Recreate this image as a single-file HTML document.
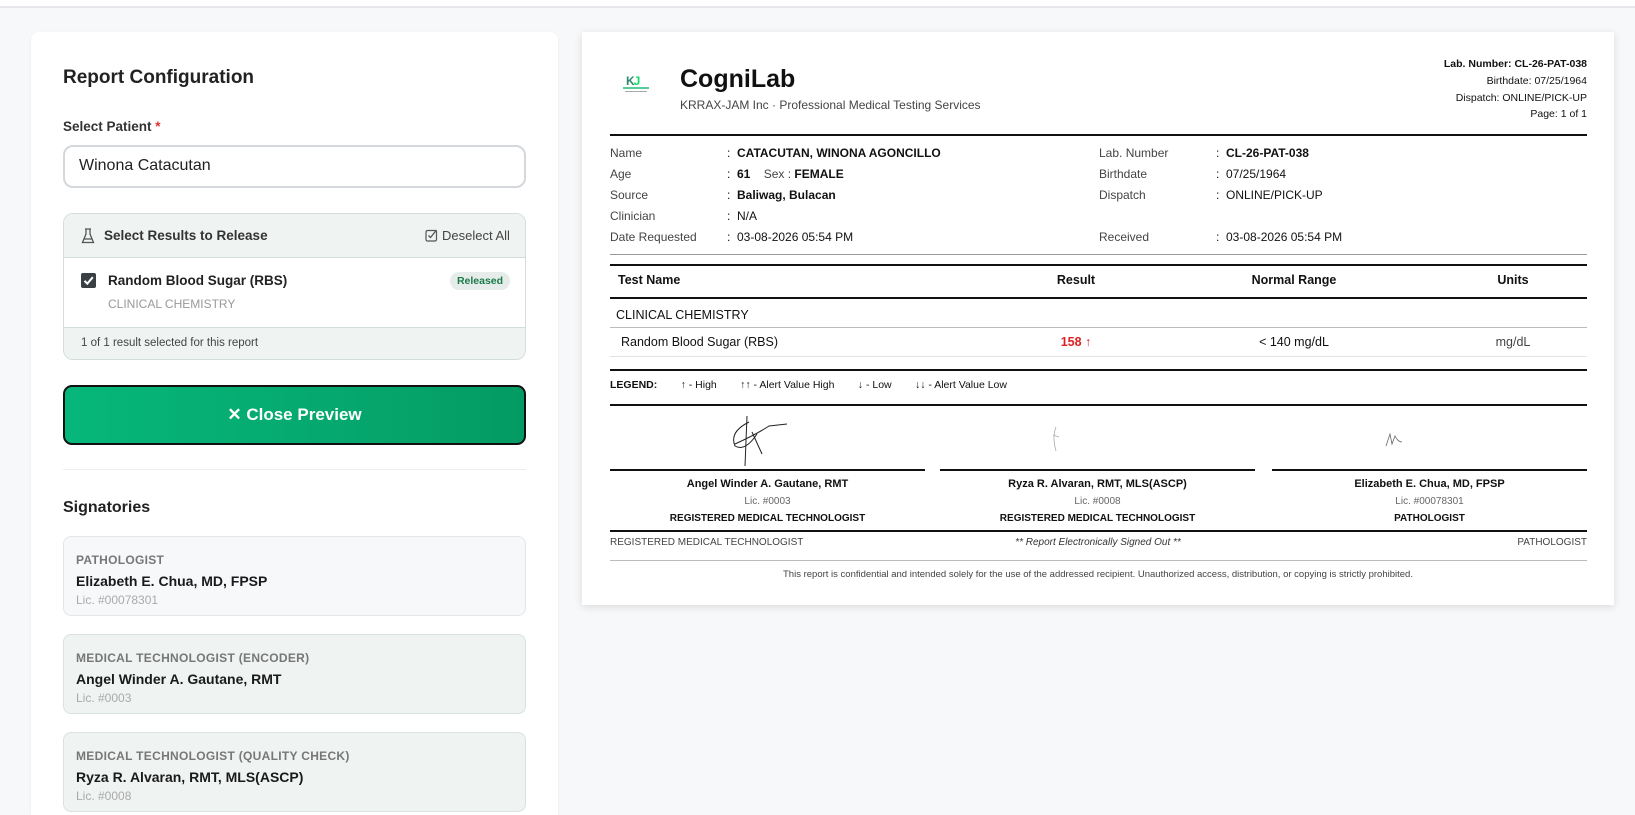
<!DOCTYPE html>
<html><head><meta charset="utf-8">
<style>
*{box-sizing:border-box;margin:0;padding:0}
html{width:1635px;height:815px;overflow:hidden}
body{width:1635px;height:815px;overflow:hidden;background:#f7f8fa;font-family:"Liberation Sans",Arial,sans-serif;position:relative;color:#1f2328}
.a{position:absolute;white-space:nowrap}
.topbar{position:absolute;left:0;top:0;width:1635px;height:8px;background:#fff;border-bottom:2px solid #e5e7ea}
.left{position:absolute;left:31px;top:32px;width:527px;height:783px;background:#fff;border-radius:8px 8px 0 0;box-shadow:0 1px 3px rgba(0,0,0,.06)}
.rep{position:absolute;left:582px;top:32px;width:1032px;height:573px;background:#fff;box-shadow:0 2px 8px rgba(0,0,0,.12);font-size:12px;color:#111}
.hl{position:absolute;left:28px;right:27px;height:0}
.lbl{color:#444}
.b{font-weight:bold}
.sig{position:absolute;left:32px;width:463px;height:80px;border:1px solid #d8e3df;border-radius:8px;background:#eff3f2}
.sig .t{position:absolute;left:12px;top:16px;font-size:12px;font-weight:bold;color:#777;letter-spacing:.3px}
.sig .n{position:absolute;left:12px;top:36px;font-size:14px;font-weight:bold;color:#1a1a1a}
.sig .l{position:absolute;left:12px;top:56px;font-size:12px;color:#aaa}
</style></head><body>
<div class="topbar"></div>
<div class="left">
 <div class="a" style="left:32px;top:35px;font-size:19px;font-weight:bold;color:#222">Report Configuration</div>
 <div class="a" style="left:32px;top:87px;font-size:13.5px;font-weight:bold;color:#333">Select Patient <span style="color:#d33">*</span></div>
 <div style="position:absolute;left:32px;top:113px;width:463px;height:43px;border:2px solid #d4d7db;border-radius:10px"></div>
 <div class="a" style="left:48px;top:125px;font-size:16px;color:#222">Winona Catacutan</div>
 <div style="position:absolute;left:32px;top:181px;width:463px;height:147px;border:1px solid #d3ded9;border-radius:10px;overflow:hidden;background:#fff">
  <div style="position:absolute;left:0;top:0;width:100%;height:44px;background:#eff3f2;border-bottom:1px solid #d3ded9"></div>
  <svg class="a" style="left:17px;top:14px" width="14" height="16" viewBox="0 0 14 16"><path d="M4 1h6M5 1v5L1.5 14.5h11L9 6V1" fill="none" stroke="#555" stroke-width="1.3"/><path d="M3 11h8" stroke="#555" stroke-width="1.2"/></svg>
  <div class="a" style="left:40px;top:14px;font-size:13.5px;font-weight:bold;color:#333">Select Results to Release</div>
  <svg class="a" style="left:361px;top:15px" width="13" height="13" viewBox="0 0 13 13"><rect x="1" y="1.5" width="10.5" height="10.5" rx="1.5" fill="none" stroke="#555" stroke-width="1.2"/><path d="M3.5 6.5l2 2L11.5 1" fill="none" stroke="#555" stroke-width="1.3"/></svg>
  <div class="a" style="left:378px;top:14px;font-size:13px;color:#444">Deselect All</div>
  <div style="position:absolute;left:17px;top:59px;width:15px;height:15px;background:#3a3f44;border-radius:2px"></div>
  <svg class="a" style="left:18px;top:60px" width="13" height="13" viewBox="0 0 13 13"><path d="M2.5 6.8l2.8 2.8L10.8 3.2" fill="none" stroke="#fff" stroke-width="2"/></svg>
  <div class="a" style="left:44px;top:59px;font-size:13.5px;font-weight:bold;color:#222">Random Blood Sugar (RBS)</div>
  <div class="a" style="left:44px;top:83px;font-size:12px;color:#999">CLINICAL CHEMISTRY</div>
  <div style="position:absolute;left:386px;top:58px;width:60px;height:18px;border-radius:9px;background:#e6ece9;font-size:10.5px;font-weight:bold;color:#1a7a4c;text-align:center;line-height:18px">Released</div>
  <div style="position:absolute;left:0;top:113px;width:100%;height:34px;background:#eff3f2;border-top:1px solid #d3ded9"></div>
  <div class="a" style="left:17px;top:123px;font-size:11.5px;color:#444">1 of 1 result selected for this report</div>
 </div>
 <div style="position:absolute;left:32px;top:353px;width:463px;height:60px;border:2px solid #111;border-radius:9px;background:linear-gradient(90deg,#06b77a,#05a56c 70%,#049a64);color:#fff;font-size:17px;font-weight:bold;text-align:center;line-height:56px">✕ Close Preview</div>
 <div style="position:absolute;left:32px;top:437px;width:463px;height:1px;background:#eceef0"></div>
 <div class="a" style="left:32px;top:467px;font-size:16px;font-weight:bold;color:#222">Signatories</div>
 <div class="sig" style="top:504px;background:#f7f8fa;border-color:#e3e6e9"><div class="t">PATHOLOGIST</div><div class="n">Elizabeth E. Chua, MD, FPSP</div><div class="l">Lic. #00078301</div></div>
 <div class="sig" style="top:602px"><div class="t">MEDICAL TECHNOLOGIST (ENCODER)</div><div class="n">Angel Winder A. Gautane, RMT</div><div class="l">Lic. #0003</div></div>
 <div class="sig" style="top:700px"><div class="t">MEDICAL TECHNOLOGIST (QUALITY CHECK)</div><div class="n">Ryza R. Alvaran, RMT, MLS(ASCP)</div><div class="l">Lic. #0008</div></div>
</div>

<div class="rep">
 <div class="a" style="left:44px;top:42px;font-size:12px;font-weight:bold;color:#2b8a6a;letter-spacing:-1px">K<span style="color:#1d6">J</span></div>
 <div class="a" style="left:41px;top:55px;width:26px;height:2px;background:#5c9;"></div>
 <div class="a" style="left:43px;top:59px;width:22px;height:1px;background:#aaa"></div>
 <div class="a" style="left:98px;top:33px;font-size:25px;font-weight:bold;color:#111">CogniLab</div>
 <div class="a" style="left:98px;top:66px;font-size:12px;color:#444">KRRAX-JAM Inc · Professional Medical Testing Services</div>
 <div class="a" style="right:27px;top:24px;font-size:10.5px;line-height:16.8px;text-align:right"><b>Lab. Number: CL-26-PAT-038</b><br>Birthdate: 07/25/1964<br>Dispatch: ONLINE/PICK-UP<br>Page: 1 of 1</div>
 <div class="hl" style="top:102px;border-top:2px solid #111"></div>
 <div class="a lbl" style="left:28px;top:111px;line-height:21px">Name<br>Age<br>Source<br>Clinician<br>Date Requested</div>
 <div class="a" style="left:145px;top:111px;line-height:21px">:<br>:<br>:<br>:<br>:</div>
 <div class="a" style="left:155px;top:111px;line-height:21px"><b>CATACUTAN, WINONA AGONCILLO</b><br><b>61</b> &nbsp;&nbsp;&nbsp;<span class="lbl">Sex :</span> <b>FEMALE</b><br><b>Baliwag, Bulacan</b><br>N/A<br>03-08-2026 05:54 PM</div>
 <div class="a lbl" style="left:517px;top:111px;line-height:21px">Lab. Number<br>Birthdate<br>Dispatch<br><br>Received</div>
 <div class="a" style="left:634px;top:111px;line-height:21px">:<br>:<br>:<br><br>:</div>
 <div class="a" style="left:644px;top:111px;line-height:21px"><b>CL-26-PAT-038</b><br>07/25/1964<br>ONLINE/PICK-UP<br><br>03-08-2026 05:54 PM</div>
 <div class="hl" style="top:222px;border-top:1px solid #999"></div>
 <div class="hl" style="top:232px;border-top:2px solid #111"></div>
 <div class="a b" style="left:36px;top:241px;font-size:12.5px">Test Name</div>
 <div class="a b" style="left:474px;top:241px;font-size:12.5px;width:40px;text-align:center">Result</div>
 <div class="a b" style="left:662px;top:241px;font-size:12.5px;width:100px;text-align:center">Normal Range</div>
 <div class="a b" style="left:906px;top:241px;font-size:12.5px;width:50px;text-align:center">Units</div>
 <div class="hl" style="top:265px;border-top:2px solid #111"></div>
 <div class="a" style="left:34px;top:276px;font-size:12.5px">CLINICAL CHEMISTRY</div>
 <div class="hl" style="top:295px;border-top:1px solid #bbb"></div>
 <div class="a" style="left:39px;top:303px;font-size:12.5px">Random Blood Sugar (RBS)</div>
 <div class="a" style="left:474px;top:303px;width:40px;text-align:center;font-size:12.5px;color:#d22;font-weight:bold">158 <span style="font-weight:normal">↑</span></div>
 <div class="a" style="left:662px;top:303px;width:100px;text-align:center;font-size:12.5px">&lt; 140 mg/dL</div>
 <div class="a" style="left:906px;top:303px;width:50px;text-align:center;font-size:12.5px;color:#444">mg/dL</div>
 <div class="hl" style="top:324px;border-top:1px solid #e2e2e2"></div>
 <div class="hl" style="top:337px;border-top:2px solid #111"></div>
 <div class="a" style="left:28px;top:347px;font-size:10.5px"><b>LEGEND:</b> &nbsp;&nbsp;&nbsp;&nbsp;&nbsp;&nbsp; ↑ - High &nbsp;&nbsp;&nbsp;&nbsp;&nbsp;&nbsp; ↑↑ - Alert Value High &nbsp;&nbsp;&nbsp;&nbsp;&nbsp;&nbsp; ↓ - Low &nbsp;&nbsp;&nbsp;&nbsp;&nbsp;&nbsp; ↓↓ - Alert Value Low</div>
 <div class="hl" style="top:372px;border-top:2px solid #111"></div>
 <svg class="a" style="left:145px;top:382px" width="80" height="55" viewBox="0 0 80 55"><path d="M22 8 Q2 18 8 32 Q18 38 30 20 M20 2 L18 52 M8 30 Q30 20 42 12 L60 10 M25 18 L35 40" fill="none" stroke="#222" stroke-width="1"/></svg>
 <svg class="a" style="left:468px;top:393px" width="12" height="28" viewBox="0 0 12 28"><path d="M6 2 Q2 12 6 26 M3 10 L9 12" fill="none" stroke="#aaa" stroke-width=".8"/></svg>
 <svg class="a" style="left:802px;top:400px" width="20" height="16" viewBox="0 0 20 16"><path d="M2 14 L6 2 L8 12 L11 4 Q14 10 18 10" fill="none" stroke="#666" stroke-width=".8"/></svg>
 <div class="a" style="left:28px;top:437px;width:315px;border-top:2px solid #111"></div>
 <div class="a" style="left:358px;top:437px;width:315px;border-top:2px solid #111"></div>
 <div class="a" style="left:690px;top:437px;width:315px;border-top:2px solid #111"></div>
 <div class="a" style="left:28px;top:444px;width:315px;text-align:center;font-size:11px;line-height:16.5px"><b>Angel Winder A. Gautane, RMT</b><br><span style="color:#666;font-size:10px">Lic. #0003</span><br><b style="font-size:10px">REGISTERED MEDICAL TECHNOLOGIST</b></div>
 <div class="a" style="left:358px;top:444px;width:315px;text-align:center;font-size:11px;line-height:16.5px"><b>Ryza R. Alvaran, RMT, MLS(ASCP)</b><br><span style="color:#666;font-size:10px">Lic. #0008</span><br><b style="font-size:10px">REGISTERED MEDICAL TECHNOLOGIST</b></div>
 <div class="a" style="left:690px;top:444px;width:315px;text-align:center;font-size:11px;line-height:16.5px"><b>Elizabeth E. Chua, MD, FPSP</b><br><span style="color:#666;font-size:10px">Lic. #00078301</span><br><b style="font-size:10px">PATHOLOGIST</b></div>
 <div class="hl" style="top:498px;border-top:2px solid #111"></div>
 <div class="a" style="left:28px;top:505px;font-size:10px;color:#444">REGISTERED MEDICAL TECHNOLOGIST</div>
 <div class="a" style="left:0;width:1032px;top:505px;text-align:center;font-size:10px;font-style:italic;color:#333">** Report Electronically Signed Out **</div>
 <div class="a" style="right:27px;top:505px;font-size:10px;color:#444">PATHOLOGIST</div>
 <div class="hl" style="top:528px;border-top:1px solid #bbb"></div>
 <div class="a" style="left:0;width:1032px;top:537px;text-align:center;font-size:9.5px;color:#444">This report is confidential and intended solely for the use of the addressed recipient. Unauthorized access, distribution, or copying is strictly prohibited.</div>
</div>
</body></html>
